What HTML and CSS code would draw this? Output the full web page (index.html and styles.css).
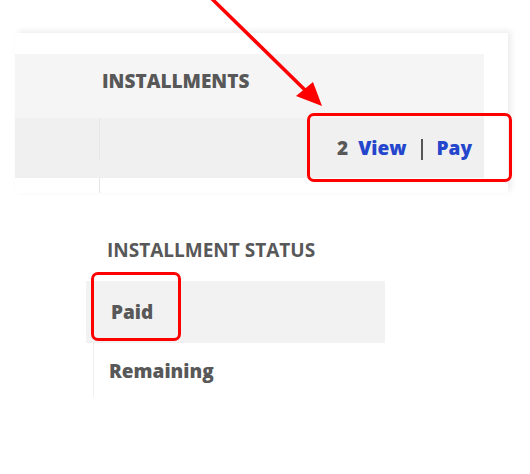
FILE: index.html
```html
<!DOCTYPE html>
<html lang="en">
<head>
    <meta charset="UTF-8">
    <meta name="viewport" content="width=device-width, initial-scale=1.0">
    <title>Installments</title>
    <link rel="stylesheet" href="styles.css">
</head>

<body>
  <div class="page">
    <div class="card">
      <div class="row row-head">
        <div class="lead"></div>
        <div class="main">INSTALLMENTS</div>
      </div>
      <div class="row row-body">
        <div class="lead"></div>
        <div class="main actions">
          <span class="count">2</span>
          <a href="#">View</a>
          <span class="bar"></span>
          <a href="#">Pay</a>
        </div>
      </div>
      <div class="row row-tail">
        <div class="lead"></div>
        <div class="main"></div>
      </div>
    </div>

    <section class="status">
      <h3>INSTALLMENT STATUS</h3>
      <div class="status-row paid">Paid</div>
      <div class="status-row remaining">Remaining</div>
    </section>

    <!-- annotations drawn over the screenshot -->
    <svg class="arrow" width="530" height="474" viewBox="0 0 530 474">
      <line x1="207" y1="-6" x2="305" y2="90" stroke="#ff0000" stroke-width="3.5"/>
      <polygon points="322,106 296,96 313,82" fill="#ff0000"/>
    </svg>
    <span class="mark mark-actions"></span>
    <span class="mark mark-paid"></span>
  </div>
</body>
</html>
```

FILE: styles.css
```css
body {
  margin: 0;
  padding: 0;
  background-color: #fff;
  color: #585858;
  font-family: 'Open Sans', 'Lato', sans-serif;
  font-weight: 800;
  font-size: 19px;
  line-height: 22px;
}
.page {
  position: relative;
  width: 530px;
  height: 474px;
  overflow: hidden;
}

/* top card */
.card {
  margin: 33px 0 0 15px;
  width: 493px;
  height: 160px;
  padding-top: 21px;
  box-sizing: border-box;
  background: #fff;
  box-shadow: 3px -2px 6px rgba(0, 0, 0, 0.08);
  overflow: hidden;
}
.row {
  display: flex;
  width: 469px;
}
.row .lead {
  width: 84px;
}
.row .main {
  flex: 1;
}
.row-head {
  height: 64px;
  background: #f5f5f5;
}
.row-head .main {
  padding: 16px 0 0 3px;
}
.row-body {
  height: 60px;
  background: #f0f0f0;
}
.row-body .main,
.row-tail .main {
  border-left: 1px solid #e6e6e6;
}
.row-tail {
  height: 15px;
}
.actions {
  display: flex;
  justify-content: flex-end;
  align-items: center;
  gap: 10px;
  height: 22px;
  padding: 19px 12px 0 0;
}
.actions a {
  color: #2446cc;
  text-decoration: none;
}
.actions .bar {
  width: 2px;
  height: 21px;
  margin: 3px 4px 0;
  background: #555;
}

/* status list */
.status {
  margin: 46px 0 0 86px;
  width: 299px;
}
.status h3 {
  margin: 0 0 20px;
  padding-left: 21px;
  font-size: 19px;
  line-height: 22px;
}
.status-row {
  box-sizing: border-box;
}
.paid {
  height: 62px;
  padding: 20px 0 0 25px;
  background: #f2f2f2;
}
.remaining {
  height: 54px;
  margin-left: 7px;
  padding: 17px 0 0 15px;
  border-left: 1px solid #eee;
}

/* red annotations */
.arrow {
  position: absolute;
  left: 0;
  top: 0;
  pointer-events: none;
}
.mark {
  position: absolute;
  box-sizing: border-box;
  border: 3px solid #ff0000;
  border-radius: 7px;
}
.mark-actions {
  left: 307px;
  top: 113px;
  width: 205px;
  height: 69px;
}
.mark-paid {
  left: 91px;
  top: 272px;
  width: 90px;
  height: 69px;
}
```
